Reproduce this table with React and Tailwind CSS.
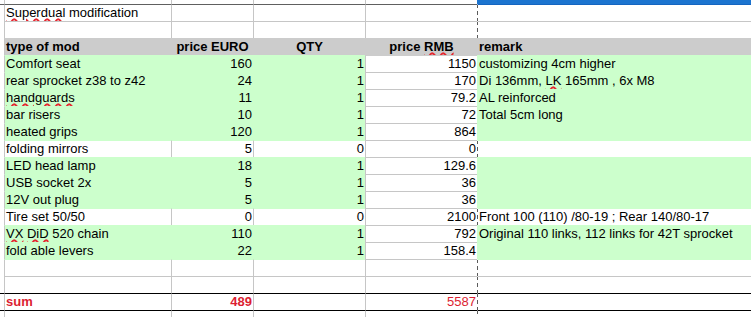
import React from "react";

const W = ({ children }) => (
  <span className="underline decoration-wavy decoration-[#e5262f] decoration-[1.5px] underline-offset-[1px]">
    {children}
  </span>
);

const BG = { w: "bg-white", g: "bg-[#ccffcc]", h: "bg-[#cccccc]" };
const TOP = {
  gray: "border-t-[#c6c6c6]",
  g: "border-t-[#ccffcc]",
  h: "border-t-[#cccccc]",
  w: "border-t-white",
  black: "border-t-black",
  dark: "border-t-[#606060]",
};
const LEFT = {
  gray: "border-l-[#c6c6c6]",
  g: "border-l-[#ccffcc]",
  h: "border-l-[#cccccc]",
  dash:
    "border-l-transparent bg-[linear-gradient(#5a5a5a_0_4px,transparent_4px_7px)] bg-[length:1px_7px] bg-repeat-y bg-origin-border",
};
const WIDTH = ["w-[167px]", "w-[82px]", "w-[112px]", "w-[112px]", "flex-1"];
const RED = "text-[#dc1e32]";

const data = [
  ["Comfort seat", "160", "1", "1150", "customizing 4cm higher", "g"],
  [
    "rear sprocket z38 to z42",
    "24",
    "1",
    "170",
    <>
      Di 136mm, <W>LK</W> 165mm , 6x M8
    </>,
    "g",
  ],
  [<W>handguards</W>, "11", "1", "79.2", "AL reinforced", "g"],
  ["bar risers", "10", "1", "72", "Total 5cm long", "g"],
  ["heated grips", "120", "1", "864", "", "g"],
  ["folding mirrors", "5", "0", "0", "", "w"],
  ["LED head lamp", "18", "1", "129.6", "", "g"],
  ["USB socket 2x", "5", "1", "36", "", "g"],
  ["12V out plug", "5", "1", "36", "", "g"],
  ["Tire set 50/50", "0", "0", "2100", "Front 100 (110) /80-19 ; Rear 140/80-17", "w"],
  [
    <>
      <W>VX</W> <W>DiD</W> 520 chain
    </>,
    "110",
    "1",
    "792",
    "Original 110 links, 112 links for 42T sprocket",
    "g",
  ],
  ["fold able levers", "22", "1", "158.4", "", "g"],
];

const ALIGN_DATA = ["left", "right", "right", "right", "left"];
const ALIGN_HEAD = ["left", "center", "center", "center", "left"];

const rows = [];
rows.push({
  cells: [<>
    <W>Superdual</W> modification
  </>, "", "", "", ""],
  fills: ["w", "w", "w", "w", "w"],
  top: "dark",
  align: ALIGN_DATA,
});
rows.push({ cells: ["", "", "", "", ""], fills: ["w", "w", "w", "w", "w"], align: ALIGN_DATA });
rows.push({
  cells: ["type of mod", "price EURO", "QTY", <>
    price <W>RMB</W>
  </>, "remark"],
  fills: ["h", "h", "h", "h", "h"],
  align: ALIGN_HEAD,
  bold: [true, true, true, true, true],
});
data.forEach((d) => {
  const f = d[5];
  rows.push({
    cells: d.slice(0, 5),
    fills: f === "g" ? ["g", "g", "g", "w", "g"] : ["w", "w", "w", "w", "w"],
    align: ALIGN_DATA,
  });
});
rows.push({ cells: ["", "", "", "", ""], fills: ["w", "w", "w", "w", "w"], align: ALIGN_DATA });
rows.push({ cells: ["", "", "", "", ""], fills: ["w", "w", "w", "w", "w"], align: ALIGN_DATA });
rows.push({
  cells: ["sum", "489", "", "5587", ""],
  fills: ["w", "w", "w", "w", "w"],
  align: ALIGN_DATA,
  top: "black",
  bold: [true, true, false, false, false],
  red: [true, true, false, true, false],
});
rows.push({
  cells: ["", "", "", "", ""],
  fills: ["w", "w", "w", "w", "w"],
  align: ALIGN_DATA,
  top: "black",
});

function alignCls(a) {
  if (a === "left") return "justify-start pl-[1px]";
  if (a === "center") return "justify-center";
  return "justify-end pr-[1px]";
}

export default function App() {
  return (
    <div className="h-[317px] w-[751px] overflow-hidden bg-white font-['Liberation_Sans',Arial,sans-serif] text-[13px] leading-[16px] text-black">
      {/* top strip (cut-off column header) */}
      <div className="flex h-[4px]">
        <div className="w-[4px] bg-white" />
        <div className="w-[167px] border-l border-l-[#c6c6c6] bg-white" />
        <div className="w-[82px] border-l border-l-[#c6c6c6] bg-white" />
        <div className="w-[112px] border-l border-l-[#c6c6c6] bg-white" />
        <div className="w-[112px] border-l border-l-[#c6c6c6] bg-white" />
        <div className="flex-1 bg-[#1c74cf]" />
      </div>
      {rows.map((row, ri) => {
        const prev = ri > 0 ? rows[ri - 1].fills : ["w", "w", "w", "w", "w"];
        return (
          <div key={ri} className="flex h-[17px]">
            <div
              className={`w-[4px] border-t ${
                row.top === "black" ? TOP.black : row.top === "dark" ? TOP.dark : TOP.w
              } bg-white`}
            />
            {row.cells.map((c, ci) => {
              const fill = row.fills[ci];
              let top;
              if (row.top === "black") top = "black";
              else if (row.top === "dark") top = ci === 4 ? "blue" : "dark";
              else if (fill !== "w") top = fill;
              else if (prev[ci] !== "w") top = prev[ci];
              else top = "gray";

              let left;
              if (ci === 0) left = "gray";
              else if (ci === 4) left = fill !== "w" ? fill : "dash";
              else if (ci === 3) left = fill === "h" ? "h" : "gray";
              else {
                const lf = row.fills[ci - 1];
                left = fill !== "w" && lf !== "w" ? fill : "gray";
              }

              const topCls = top === "blue" ? "border-t-[#1565c0]" : TOP[top];
              const bold = row.bold && row.bold[ci] ? "font-bold" : "";
              const red = row.red && row.red[ci] ? RED : "";
              return (
                <div
                  key={ci}
                  className={`box-border flex items-start whitespace-nowrap border-t border-l ${WIDTH[ci]} ${BG[fill]} ${topCls} ${LEFT[left]} ${alignCls(
                    row.align[ci]
                  )} ${bold} ${red}`}
                >
                  <span>{c}</span>
                </div>
              );
            })}
          </div>
        );
      })}
    </div>
  );
}
